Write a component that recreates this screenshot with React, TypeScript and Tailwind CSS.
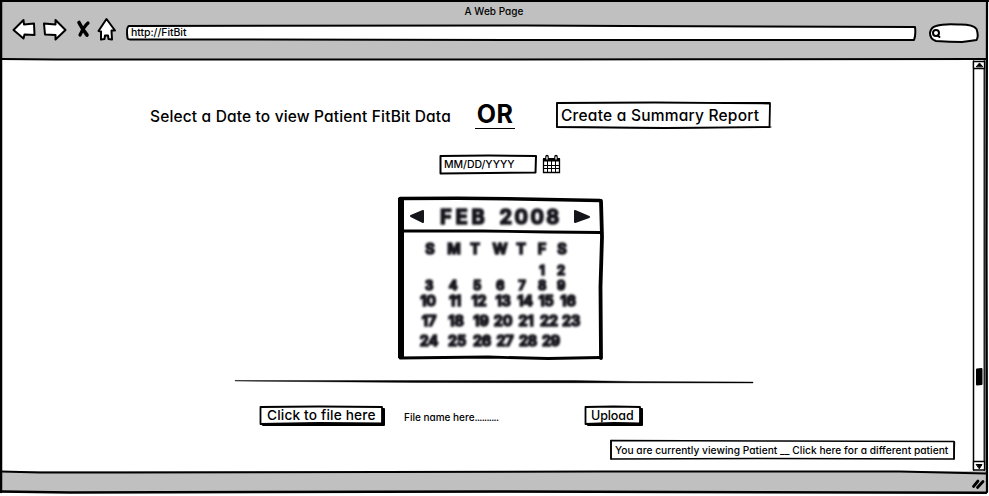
import React from "react";

/** Hand-drawn artwork that fills its relatively positioned parent. */
function Ink({ w, h, children }: { w: number; h: number; children: React.ReactNode }) {
  return (
    <svg
      className="pointer-events-none absolute inset-0 overflow-visible"
      width={w}
      height={h}
      viewBox={`0 0 ${w} ${h}`}
      fill="none"
      stroke="#000"
      strokeLinejoin="round"
      strokeLinecap="round"
    >
      {children}
    </svg>
  );
}

type Cell = [label: string, center: number];

const weeks: { top: string; cells: Cell[] }[] = [
  { top: "h-[26px]", cells: [["S", 32], ["M", 56], ["T", 77], ["W", 102], ["T", 123], ["F", 144], ["S", 164]] },
  { top: "h-[16px] text-[13px]", cells: [["1", 144], ["2", 163]] },
  { top: "h-[13px] text-[13px]", cells: [["3", 31], ["4", 55], ["5", 79], ["6", 102], ["7", 124], ["8", 144], ["9", 163]] },
  { top: "h-[20px]", cells: [["10", 30], ["11", 57], ["12", 81], ["13", 105], ["14", 127], ["15", 148], ["16", 170]] },
  { top: "h-5", cells: [["17", 31], ["18", 58], ["19", 83], ["20", 105], ["21", 128], ["22", 151], ["23", 173]] },
  { top: "h-5", cells: [["24", 31], ["25", 59], ["26", 84], ["27", 107], ["28", 130], ["29", 153]] },
];

function Week({ top, cells }: { top: string; cells: Cell[] }) {
  return (
    <div className={`flex items-center ${top}`}>
      {cells.map(([label, center], i) => {
        const previous = i === 0 ? 0 : cells[i - 1][1];
        return (
          <span key={i} className="flex w-0 justify-center" style={{ marginLeft: center - previous }}>
            {label}
          </span>
        );
      })}
    </div>
  );
}

function Calendar() {
  return (
    <div className="relative ml-[396px] mt-[21px] h-[164px] w-[206px] text-[#15151c]">
      <Ink w={206} h={164}>
        <path d="M3 1V161" strokeWidth="6" strokeLinecap="butt" />
        <path d="M2 1.500L60 1.200L110 1.800L202 3.500" strokeWidth="3.600" />
        <path d="M203 4L204 40L202.500 90L203 161" strokeWidth="3.800" />
        <path d="M2 161L90 160L150 161.500L203 160.500" strokeWidth="2.800" />
        <path d="M4 34L85 34L150 35L202 35.500" strokeWidth="2.800" />
        <path d="M25 14V25L13 19Z M177 14V25L191 20Z" fill="#15151c" stroke="#15151c" strokeWidth="2" className="blur-[0.6px]" />
      </Ink>
      <div className="flex h-[39px] items-center gap-[11px] pl-[42px] text-[20px] font-bold blur-[0.8px]">
        <span className="tracking-[3.800px] [-webkit-text-stroke:1.5px_#15151c]">FEB</span>
        <span className="tracking-[2.4px] [-webkit-text-stroke:1.5px_#15151c]">2008</span>
      </div>
      <div className="text-[14.5px] font-bold leading-[12px] tracking-[-0.2px] blur-[0.8px] [-webkit-text-stroke:1.5px_#15151c]">
        {weeks.map((week, i) => (
          <Week key={i} {...week} />
        ))}
      </div>
    </div>
  );
}

export default function App() {
  return (
    <div className="h-[496px] w-[989px] overflow-hidden bg-white font-medium text-black [font-family:Inter,'Liberation_Sans',sans-serif] [font-feature-settings:'cv11','ss03']">
      <div className="relative flex h-[494px] w-[988px] flex-col pl-[2px] pr-[2px]">
        <header className="relative h-[59px] bg-[#c0c0c0]">
          <div className="flex h-[22px] items-center justify-center text-[10px] leading-none tracking-[0.04px]">A Web Page</div>
          <div className="flex items-start">
            <svg className="ml-[10px] -mt-[5px]" width="110" height="26" fill="#fff" stroke="#000" strokeWidth="2" strokeLinejoin="round" strokeLinecap="round">
              <path d="M1.500 13L11.500 3L12 7.500L22 6.500L22.500 18L12.500 17.500L11.500 21.500Z" />
              <path d="M32 6.500L43.500 7.500L43.500 3L53.500 13L43.500 22.500L43.500 18L33 17.500Z" />
              <path d="M67 5.500Q70.500 12.500 75 18" strokeWidth="3.600" />
              <path d="M76 6Q72 9.500 68 18" strokeWidth="3.200" />
              <path d="M86.500 14L94.500 2L103 13.500L99.500 13.500L100 22.500L96.500 22L96 18.500H93L92.500 22L89 22.500V14.500Z" />
            </svg>
            <div className="relative ml-[4px] mt-[3px] flex h-[17px] w-[791px] items-center pl-[5px] text-[10.5px] leading-none tracking-[-0.05px]">
              <Ink w={791} h={17}>
                <path d="M3 1Q0 2 1.500 13Q1.500 15 8 14.500L500 15L788 15Q790 10 789 2L500 1L400 0.500Z" fill="#fff" strokeWidth="2" />
              </Ink>
              <span className="relative">http://FitBit</span>
            </div>
            <svg className="ml-[11px] mt-px" width="52" height="22" fill="#fff" stroke="#000" strokeWidth="2" strokeLinecap="round">
              <path d="M8 3Q16 .5 30 1.500Q45 1 48.500 6Q51 13 48.500 17Q42 18 34 19Q22 19 8 18Q2 16 2 10Q3 4 8 3Z" />
              <circle cx="8" cy="10" r="3" />
              <path d="M9.500 12.500L11.500 14" />
            </svg>
          </div>
        </header>

        <div className="flex h-[412px]">
          <main className="h-full w-[970px]">
            <div className="flex h-[72px] items-end pb-[2px]">
              <p className="ml-[148px] w-[326px] whitespace-nowrap pb-[5px] text-[15.5px] leading-none tracking-[0.16px]">Select a Date to view Patient FitBit Data</p>
              <div className="-ml-[1px] flex h-[30px] w-[40px] items-start justify-center border-b border-black text-[25px] font-bold leading-[31px] tracking-[0.3px]">OR</div>
              <button className="relative ml-[40px] flex h-[29px] w-[217px] items-center whitespace-nowrap pl-[6px] text-[15.5px] leading-none tracking-[0.23px]">
                <Ink w={217} h={29}>
                  <path d="M2 3L100 2.500L215 3.500L214.500 27L110 28L2 27Z" strokeWidth="1.800" />
                  <path d="M2 3L1.500 27M110 2.500L215 2.500M2 27L110 28L216 27" strokeWidth="1" />
                </Ink>
                <span className="relative top-px">Create a Summary Report</span>
              </button>
            </div>
            <div className="ml-[437px] mt-[23px] flex h-[22px] items-start">
              <div className="relative flex h-[21px] w-[98px] items-center pl-[5px] text-[10.5px] leading-none tracking-[-0.05px]">
                <Ink w={98} h={21}>
                  <path d="M1.500 2L50 1.500L97 2L96.500 18.500L50 19L1.500 19.500Z" strokeWidth="2" />
                </Ink>
                <span className="relative top-px">MM/DD/YYYY</span>
              </div>
              <svg className="ml-[5px]" width="20" height="21" fill="none" stroke="#000" strokeWidth="1">
                <path d="M1.500 5.500H17.500V18.500H1.500Z" fill="#fff" strokeWidth="1.300" />
                <path d="M1 4H18V7.500H1Z" fill="#000" stroke="none" />
                <path d="M5.500 6V18M9.500 6V18M13.500 6V18M1 11.500H18M1 14.500H18" />
                <path d="M5 5.500V2.500M14 5.500V2.500" stroke="#000" strokeWidth="3.500" strokeLinecap="round" />
                <path d="M5 5.500V2.500M14 5.500V2.500" stroke="#fff" strokeWidth="1.300" />
              </svg>
            </div>
            <Calendar />
            <svg className="ml-[232px] mt-[15px]" width="522" height="10">
              <path d="M1 5L180 6.500L519 7V6L400 5.500L340 4.500L100 4.500L1 4.500Z" fill="#000" stroke="#000" strokeWidth=".4" />
            </svg>
            <div className="mt-[19px] flex h-[25px] items-start">
              <button className="relative ml-[257px] flex h-[22px] w-[128px] items-center whitespace-nowrap pl-[8px] text-[13.7px] leading-none tracking-[0.16px]">
                <Ink w={128} h={22}>
                  <path d="M4 4H125V20H4Z" fill="#000" strokeWidth="2" />
                  <path d="M1.500 2L60 1.500L123 2V18.500L60 18L1.500 19Z" fill="#fff" strokeWidth="1.800" />
                </Ink>
                <span className="relative">Click to file here</span>
              </button>
              <span className="ml-[17px] mt-[7px] w-[180px] whitespace-nowrap text-[10px] leading-none">File name here<span className="tracking-[-0.65px]">..........</span></span>
              <button className="relative flex h-[22px] w-[60px] items-center pl-[7px] text-[12.5px] leading-none tracking-[-0.1px]">
                <Ink w={60} h={22}>
                  <path d="M4 4H58V20H4Z" fill="#000" strokeWidth="2" />
                  <path d="M1.500 2L30 1.500L56 2V18.500L30 18L1.500 19Z" fill="#fff" strokeWidth="1.800" />
                </Ink>
                <span className="relative">Upload</span>
              </button>
            </div>
            <div className="relative ml-[608px] mt-[9px] flex h-[22px] w-[346px] items-center whitespace-nowrap pl-[5px] text-[10.2px] leading-none tracking-[0.03px]">
              <Ink w={346} h={22}>
                <path d="M1 1.500L170 2L344 2.500V20L150 19.500L1 20Z" strokeWidth="1.600" />
                <path d="M1 1.500V20M344.500 3L344 20" strokeWidth="1.400" />
              </Ink>
              <span className="relative">You are currently viewing Patient __ Click here for a different patient</span>
            </div>
          </main>
          <aside className="relative h-full w-[14px]">
            <Ink w={14} h={412}>
              <path d="M1.500 2L1.500 411" strokeWidth="1.500" />
              <path d="M12.500 2L12.500 411" strokeWidth="2" stroke="#222" />
              <path d="M1.500 2.500H12.500V9.500H1.500ZM1.500 402.500H12.500V411H1.500Z" fill="#fff" strokeWidth="1.300" />
              <path d="M4.500 7.500L7.500 4L10.500 7.500ZM4.500 405.500L10 405.500L7.500 409.500Z" fill="#000" strokeWidth="1" />
              <path d="M5 310.500L9.500 310V325L5 325.500Z" fill="#000" strokeWidth="2" />
            </Ink>
          </aside>
        </div>

        <footer className="h-[22px] bg-[#c0c0c0]" />

        <Ink w={988} h={494}>
          <path d="M1 0V492" strokeWidth="2.500" />
          <path d="M0 1L988 1" strokeWidth="2.200" />
          <path d="M987 1L986.500 250L987 492" strokeWidth="2.200" />
          <path d="M1 59L56 59.500L500 59.500L700 59.300L986 59" strokeWidth="2" />
          <path d="M1 471.500L40 472.500L120 472.500L600 471.500L900 471.500L986 473.500" strokeWidth="2" />
          <path d="M1 491.500L70 492.500L500 491.500L986 492.800" strokeWidth="2.600" />
          <path d="M973.500 486.500L978 481M977.500 487.500L983 481.500" strokeWidth="2.800" />
        </Ink>
      </div>
    </div>
  );
}
